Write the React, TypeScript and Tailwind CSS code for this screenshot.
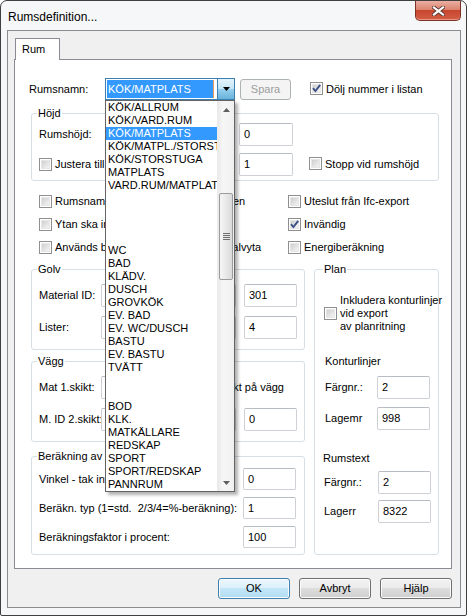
import React from "react";

function Check({ checked = false }: { checked?: boolean }) {
  return (
    <span className="relative inline-flex w-[13px] h-[13px] shrink-0 border border-[#8f8f8f] bg-white p-[1px]">
      <span className="block w-full h-full border border-[#e6e6e6] bg-[linear-gradient(135deg,#cfcfcf,#f4f4f4)]" />
      {checked && (
        <svg className="absolute left-0 top-0" width="11" height="11" viewBox="0 0 11 11">
          <path d="M2 5.2 L4.4 8 L9.2 1.8" fill="none" stroke="#3d5289" strokeWidth="1.9" />
        </svg>
      )}
    </span>
  );
}

function Field({ value = "", className = "" }: { value?: string; className?: string }) {
  return (
    <div
      className={
        "h-[23px] shrink-0 border border-[#cdd1d6] border-t-[#b8bcc3] rounded-[2px] bg-white flex items-center pl-[4px] " +
        className
      }
    >
      {value}
    </div>
  );
}

function Group({
  title,
  className = "",
  titleClass = "left-[5px]",
  children,
}: {
  title: string;
  className?: string;
  titleClass?: string;
  children?: React.ReactNode;
}) {
  return (
    <div className={"relative shrink-0 border border-[#d5dfe5] rounded-[3px] " + className}>
      <span className={"absolute -top-[7px] bg-white px-[1px] leading-[13px] " + titleClass}>{title}</span>
      {children}
    </div>
  );
}

function Btn({ label, def = false }: { label: string; def?: boolean }) {
  return (
    <div
      className={
        "w-[72px] h-[21px] rounded-[3px] border flex items-center justify-center shadow-[inset_0_0_0_1px_#fbfbfb] " +
        (def
          ? "border-[#3c7fb1] bg-[linear-gradient(to_bottom,#ecf6fc_0%,#dcf0fb_45%,#c3e6f8_50%,#b2dcf3_100%)]"
          : "border-[#707070] bg-[linear-gradient(to_bottom,#f2f2f2_0%,#ebebeb_45%,#dddddd_50%,#cfcfcf_100%)]")
      }
    >
      {label}
    </div>
  );
}

const items = [
  "KÖK/ALLRUM",
  "KÖK/VARD.RUM",
  "KÖK/MATPLATS",
  "KÖK/MATPL./STORSTUGA",
  "KÖK/STORSTUGA",
  "MATPLATS",
  "VARD.RUM/MATPLATS",
  "",
  "",
  "",
  "",
  "WC",
  "BAD",
  "KLÄDV.",
  "DUSCH",
  "GROVKÖK",
  "EV. BAD",
  "EV. WC/DUSCH",
  "BASTU",
  "EV. BASTU",
  "TVÄTT",
  "",
  "",
  "BOD",
  "KLK.",
  "MATKÄLLARE",
  "REDSKAP",
  "SPORT",
  "SPORT/REDSKAP",
  "PANNRUM",
];

function DropList() {
  return (
    <div className="absolute left-[-1px] top-[21px] z-20 w-[130px] h-[392px] border border-[#646464] bg-white flex shadow-[3px_3px_3px_rgba(0,0,0,0.3)]">
      <div className="w-[111px] flex flex-col overflow-hidden">
        {items.map((t, i) => (
          <div
            key={i}
            className={
              "h-[13px] leading-[13px] pl-[2px] whitespace-nowrap overflow-hidden " +
              (i === 2 ? "bg-[#3399ff] text-white" : "")
            }
          >
            {t}
          </div>
        ))}
      </div>
      <div className="w-[17px] flex flex-col border-l border-[#ebebeb] bg-[linear-gradient(to_right,#eaeaea,#f6f6f6_30%,#f0f0f0)]">
        <div className="h-[17px] flex items-center justify-center">
          <svg width="7" height="4" viewBox="0 0 7 4">
            <path d="M0 4 L3.5 0 L7 4 Z" fill="#5f5f5f" />
          </svg>
        </div>
        <div className="h-[75px]" />
        <div className="mx-[1px] h-[87px] rounded-[2px] border border-[#9b9b9b] bg-[linear-gradient(to_right,#f6f6f6,#e9e9e9_50%,#dadada)] flex flex-col items-center justify-center gap-[1px]">
          <div className="w-[7px] h-[1px] bg-[#6f6f6f]" />
          <div className="w-[7px] h-[1px] bg-[#6f6f6f]" />
          <div className="w-[7px] h-[1px] bg-[#6f6f6f]" />
          <div className="w-[7px] h-[1px] bg-[#6f6f6f]" />
        </div>
        <div className="flex-1" />
        <div className="h-[17px] flex items-center justify-center">
          <svg width="7" height="4" viewBox="0 0 7 4">
            <path d="M0 0 L3.5 4 L7 0 Z" fill="#5f5f5f" />
          </svg>
        </div>
      </div>
    </div>
  );
}

export default function App() {
  return (
    <div className="w-[467px] h-[616px] relative overflow-hidden bg-[#f6f7f8] border border-[#3f3f3f] rounded-t-[7px] rounded-b-[2px] text-[11px] text-black font-['Liberation_Sans',Arial,sans-serif]">
      {/* Title bar */}
      <div className="h-[29px] flex items-start justify-between">
        <div className="pl-[7px] pt-[3px] h-[29px] flex items-center text-[12px]">Rumsdefinition...</div>
        <div className="mr-[5px] w-[46px] h-[20px] rounded-b-[5px] border border-t-0 border-[#7e3126] bg-[linear-gradient(to_bottom,#eab0a2_0%,#dd8470_45%,#c9462f_50%,#d25d44_100%)] flex items-center justify-center shadow-[inset_0_-1px_0_#e89a86]">
          <svg width="13" height="10" viewBox="0 0 13 10">
            <path d="M2 1.5 L11 8.5 M11 1.5 L2 8.5" stroke="#5b3a35" strokeWidth="4" strokeLinecap="square" />
            <path d="M2 1.5 L11 8.5 M11 1.5 L2 8.5" stroke="#ffffff" strokeWidth="2.2" strokeLinecap="square" />
          </svg>
        </div>
      </div>

      {/* Client area */}
      <div className="ml-[6px] w-[454px] h-[578px] border border-[#8b8b8b] bg-[#f0f0f0] flex flex-col">
        <div className="ml-[7px] mt-[7px] w-[45px] h-[22px] -mb-[1px] relative z-[1] border border-b-0 border-[#898c95] bg-white flex items-center pl-[6px]">
          Rum
        </div>
        <div className="ml-[6px] w-[438px] h-[510px] border border-[#898c95] bg-white flex flex-col">
          {/* Rumsnamn row */}
          <div className="mt-[18px] h-[22px] flex items-center pl-[14px]">
            <div className="w-[76px]">Rumsnamn:</div>
            <div className="relative w-[130px] h-[22px] border border-[#3c7fb1] bg-white flex">
              <div className="w-[111px] flex items-center pl-[1px]">
                <div className="w-[107px] h-[18px] bg-[#3399ff] text-white pl-[1px] flex items-center border-r border-[#e8a060]">
                  KÖK/MATPLATS
                </div>
              </div>
              <div className="w-[17px] border-l border-[#3c7fb1] bg-[linear-gradient(to_bottom,#e5f4fc_0%,#c4e5f6_50%,#98d1ef_51%,#68b3db_100%)] flex items-center justify-center">
                <svg width="7" height="4" viewBox="0 0 7 4">
                  <path d="M0 0 L3.5 4 L7 0 Z" fill="#000" />
                </svg>
              </div>
              <DropList />
            </div>
            <div className="ml-[5px] w-[51px] h-[21px] border border-[#adb2b5] rounded-[3px] bg-[#f4f4f4] text-[#9c9c9c] flex items-center justify-center">
              Spara
            </div>
            <div className="ml-[19px]">
              <Check checked />
            </div>
            <div className="ml-[3px]">Dölj nummer i listan</div>
          </div>

          {/* Höjd */}
          <Group title="Höjd" className="mt-[13px] ml-[16px] w-[408px] h-[68px]">
            <div className="mt-[9px] h-[22px] flex items-center pl-[7px]">
              <div className="w-[200px]">Rumshöjd:</div>
              <Field value="0" className="w-[54px]" />
            </div>
            <div className="mt-[8px] h-[22px] flex items-center pl-[7px]">
              <div className="w-[200px] flex items-center whitespace-nowrap">
                <Check />
                <span className="ml-[3px]">Justera till takhöjd</span>
              </div>
              <Field value="1" className="w-[54px]" />
              <div className="ml-[16px]">
                <Check />
              </div>
              <span className="ml-[3px]">Stopp vid rumshöjd</span>
            </div>
          </Group>

          {/* Checkbox rows */}
          <div className="mt-[9px] flex flex-col pl-[24px]">
            <div className="h-[23px] flex items-center">
              <div className="w-[249px] flex items-center whitespace-nowrap">
                <Check />
                <span className="ml-[3px]">Rumsnamnet skrivs ut på planritningen</span>
              </div>
              <Check />
              <span className="ml-[3px]">Uteslut från Ifc-export</span>
            </div>
            <div className="h-[23px] flex items-center">
              <div className="w-[249px] flex items-center whitespace-nowrap">
                <Check />
                <span className="ml-[3px]">Ytan ska ingå i boarea</span>
              </div>
              <Check checked />
              <span className="ml-[3px]">Invändig</span>
            </div>
            <div className="h-[23px] flex items-center">
              <div className="w-[249px] flex items-center whitespace-nowrap">
                <Check />
                <span className="ml-[3px]">Används bara för beräkningen av totalvyta</span>
              </div>
              <Check />
              <span className="ml-[3px]">Energiberäkning</span>
            </div>
          </div>

          {/* Lower area */}
          <div className="mt-[10px] flex pl-[16px] gap-[9px]">
            <div className="w-[274px] flex flex-col">
              <Group title="Golv" className="h-[81px]">
                <div className="mt-[14px] h-[23px] flex items-center pl-[7px]">
                  <div className="w-[62px]">Material ID:</div>
                  <Field className="w-[135px]" />
                  <Field value="301" className="ml-[8px] w-[53px]" />
                </div>
                <div className="mt-[9px] h-[23px] flex items-center pl-[7px]">
                  <div className="w-[62px]">Lister:</div>
                  <Field className="w-[135px]" />
                  <Field value="4" className="ml-[8px] w-[53px]" />
                </div>
              </Group>
              <Group title="Vägg" className="mt-[11px] h-[81px]">
                <div className="mt-[14px] h-[23px] flex items-center pl-[7px] pr-[20px]">
                  <div className="w-[62px]">Mat 1.skikt:</div>
                  <Field className="w-[70px]" />
                  <span className="ml-auto whitespace-nowrap">Visa 1.skikt på vägg</span>
                </div>
                <div className="mt-[9px] h-[23px] flex items-center pl-[7px]">
                  <div className="w-[62px] whitespace-nowrap">M. ID 2.skikt:</div>
                  <Field className="w-[135px]" />
                  <Field value="0" className="ml-[8px] w-[53px]" />
                </div>
              </Group>
              <Group title="Beräkning av lutande tak" className="mt-[14px] h-[99px]">
                <div className="mt-[11px] h-[22px] flex items-center pl-[7px]">
                  <div className="w-[204px] whitespace-nowrap">Vinkel - tak intill vägg (grader):</div>
                  <Field value="0" className="w-[53px] !h-[22px]" />
                </div>
                <div className="mt-[7px] h-[22px] flex items-center pl-[7px]">
                  <div className="w-[204px] whitespace-pre">Beräkn. typ (1=std.  2/3/4=%-beräkning):</div>
                  <Field value="1" className="w-[53px] !h-[22px]" />
                </div>
                <div className="mt-[7px] h-[22px] flex items-center pl-[7px]">
                  <div className="w-[204px] whitespace-nowrap">Beräkningsfaktor i procent:</div>
                  <Field value="100" className="w-[53px] !h-[22px]" />
                </div>
              </Group>
            </div>

            <Group title="Plan" className="w-[125px] h-[286px]" titleClass="left-[8px]">
              <div className="mt-[24px] flex items-center pl-[9px]">
                <Check />
                <div className="ml-[3px] leading-[13px] whitespace-nowrap">
                  <div>Inkludera konturlinjer</div>
                  <div>vid export</div>
                  <div>av planritning</div>
                </div>
              </div>
              <div className="mt-[22px] pl-[10px] leading-[13px]">Konturlinjer</div>
              <div className="mt-[8px] h-[23px] flex items-center pl-[10px]">
                <div className="w-[52px]">Färgnr.:</div>
                <Field value="2" className="w-[53px]" />
              </div>
              <div className="mt-[8px] h-[23px] flex items-center pl-[10px]">
                <div className="w-[52px]">Lagemr</div>
                <Field value="998" className="w-[53px]" />
              </div>
              <div className="mt-[22px] pl-[8px] leading-[13px]">Rumstext</div>
              <div className="mt-[6px] h-[23px] flex items-center pl-[9px]">
                <div className="w-[54px]">Färgnr.:</div>
                <Field value="2" className="w-[53px]" />
              </div>
              <div className="mt-[6px] h-[23px] flex items-center pl-[9px]">
                <div className="w-[54px]">Lagerr</div>
                <Field value="8322" className="w-[53px]" />
              </div>
            </Group>
          </div>
        </div>

        {/* Buttons */}
        <div className="mt-[9px] flex justify-end gap-[9px] pr-[8px]">
          <Btn label="OK" def />
          <Btn label="Avbryt" />
          <Btn label="Hjälp" />
        </div>
      </div>
    </div>
  );
}
